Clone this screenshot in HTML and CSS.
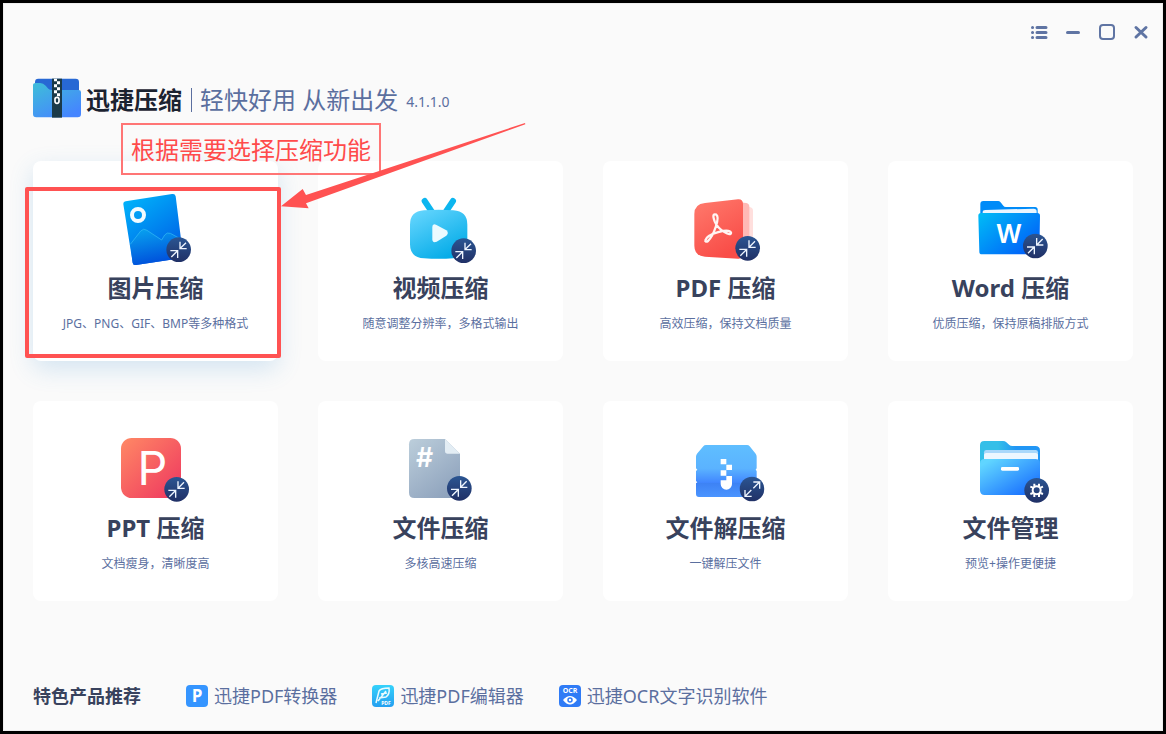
FILE: index.html
```html
<!DOCTYPE html>
<html lang="zh-CN">
<head>
    <meta charset="UTF-8">
    <title>迅捷压缩</title>
    <meta name="viewport" content="width=device-width, initial-scale=1">
    <link rel="stylesheet" href="styles.css">
</head>
<body>
    <!-- shared gradients and badges -->
    <svg class="defs" width="0" height="0" aria-hidden="true">
        <defs>
            <linearGradient id="navy" x1="0" y1="0" x2="0" y2="1"><stop offset="0" stop-color="#2b5592"/><stop offset="1" stop-color="#203066"/></linearGradient>
            <linearGradient id="photo" x1="0.2" y1="0" x2="0.8" y2="1"><stop offset="0" stop-color="#00b2fa"/><stop offset="1" stop-color="#0057e4"/></linearGradient>
            <linearGradient id="hill" x1="0" y1="0" x2="0.3" y2="1"><stop offset="0" stop-color="#08a6f0"/><stop offset="1" stop-color="#0050db"/></linearGradient>
            <linearGradient id="tv" x1="0" y1="0" x2="0.6" y2="1"><stop offset="0" stop-color="#6bd8ff"/><stop offset="1" stop-color="#05ace8"/></linearGradient>
            <linearGradient id="pdf" x1="0" y1="0" x2="0.5" y2="1"><stop offset="0" stop-color="#ff7b6d"/><stop offset="1" stop-color="#f94d48"/></linearGradient>
            <linearGradient id="word" x1="0" y1="0" x2="1" y2="0.8"><stop offset="0" stop-color="#00bdf6"/><stop offset="1" stop-color="#005df9"/></linearGradient>
            <linearGradient id="ppt" x1="0" y1="0" x2="1" y2="1"><stop offset="0" stop-color="#ff8965"/><stop offset="1" stop-color="#ee355f"/></linearGradient>
            <linearGradient id="doc" x1="0" y1="0" x2="0.7" y2="1"><stop offset="0" stop-color="#bccedb"/><stop offset="1" stop-color="#8fa3bd"/></linearGradient>
            <linearGradient id="zip" x1="0" y1="0" x2="0" y2="1"><stop offset="0" stop-color="#5fbeff"/><stop offset="0.45" stop-color="#5bb3ff"/><stop offset="0.72" stop-color="#4187ff"/><stop offset="0.73" stop-color="#3d82f4"/><stop offset="1" stop-color="#4a94ff"/></linearGradient>
            <linearGradient id="folder" x1="0" y1="0" x2="1" y2="1"><stop offset="0.1" stop-color="#60d5ff"/><stop offset="1" stop-color="#0f62ff"/></linearGradient>
            <linearGradient id="folderBack" x1="0" y1="0" x2="1" y2="0"><stop offset="0.3" stop-color="#35bfe8"/><stop offset="0.6" stop-color="#2196f5"/></linearGradient>
            <linearGradient id="logo" x1="0" y1="0" x2="0.7" y2="1"><stop offset="0.1" stop-color="#3fb9dc"/><stop offset="1" stop-color="#4585ff"/></linearGradient>
            <linearGradient id="edit" x1="0" y1="0" x2="0" y2="1"><stop offset="0" stop-color="#35d2fb"/><stop offset="1" stop-color="#249ff0"/></linearGradient>
        </defs>
        <symbol id="shrink" viewBox="-38 -38 76 76">
            <circle r="37" fill="url(#navy)"/>
            <path d="M4-24V-3H24M5-4L22-21M-25 3H-3V25M-4 4L-22 22" fill="none" stroke="#eef5ff" stroke-width="4"/>
        </symbol>
        <symbol id="expand" viewBox="-38 -38 76 76">
            <circle r="37" fill="url(#navy)"/>
            <path d="M4-21H23V-1M22-20L4-2M-21 3V22H-1M-20 21L-2 3" fill="none" stroke="#eef5ff" stroke-width="4"/>
        </symbol>
        <symbol id="gear" viewBox="-38 -38 76 76">
            <circle r="37" fill="url(#navy)"/>
            <circle r="12" fill="none" stroke="#fff" stroke-width="6"/>
            <path d="M-7-11V-20M7-11V-20M-7 11V20M7 11V20M-11-8L-19-11M-11 8L-19 11M11-8L19-11M11 8L19 11" stroke="#fff" stroke-width="6"/>
        </symbol>
    </svg>

    <div class="window">
        <div class="titlebar">
            <button type="button" aria-label="菜单"><svg viewBox="0 0 36 36"><path d="M14 9H32M14 19H32M14 29H32M5 9H5.200M5 19H5.200M5 29H5.200" stroke-width="6"/></svg></button>
            <button type="button" aria-label="最小化"><svg viewBox="0 0 36 36"><path d="M7 19H29" stroke-width="6"/></svg></button>
            <button type="button" aria-label="最大化"><svg viewBox="0 0 36 36"><rect x="4" y="4" width="28" height="28" rx="6" stroke-width="4"/></svg></button>
            <button type="button" aria-label="关闭"><svg viewBox="0 0 36 36"><path d="M8 9L28 28M28 9L8 28" stroke-width="6"/></svg></button>
        </div>

        <header class="brand">
            <svg class="logo" viewBox="99 54 144 120" aria-hidden="true">
                <path d="M105 90V66Q105 56 115 56H227Q237 56 237 66V100H105Z" fill="#2768d4"/>
                <path d="M99 76Q99 69 107 69H120Q130 69 137 77L145 86Q149 90 156 90H236Q243 90 243 97V162Q243 172 233 172H109Q99 172 99 162Z" fill="url(#logo)"/>
                <path d="M156 56H186V173H156Z" fill="#1b3a48"/>
                <path d="M162 56H171V64H162ZM171 64H180V73H171ZM162 73H171V82H162ZM171 82H180V91H171ZM162 91H171V100H162ZM171 100H180V109H171Z" fill="#fff"/>
                <rect x="165" y="112" width="12" height="18" rx="6" fill="none" stroke="#fff" stroke-width="5"/>
            </svg>
            <h1>迅捷压缩</h1>
            <p class="slogan">轻快好用 从新出发</p>
            <span class="version">4.1.1.0</span>
        </header>

        <main class="grid">
            <div class="cell marked">
                <a class="card active" href="#">
                    <svg class="icon" viewBox="285 39 243 228" aria-hidden="true">
                        <path d="M317 64L456 42Q465 40 467 49L489 226Q490 234 482 235L348 255Q339 257 338 248L310 73Q309 65 317 64Z" fill="url(#photo)"/>
                        <path d="M331 193L362 153Q371 143 381 151L425 180L434 165Q441 156 451 160L484 178L490 227Q490 234 482 235L348 255Q339 257 338 248Z" fill="url(#hill)"/>
                        <path d="M331 193L362 153Q371 143 381 151L425 180L434 165Q441 156 451 160L484 178" fill="none" stroke="#35bdf6" stroke-width="2"/>
                        <circle cx="354" cy="105" r="18" fill="none" stroke="#f2fbff" stroke-width="12"/>
                        <use href="#shrink" x="438" y="171" width="76" height="76"/>
                    </svg>
                    <h2>图片压缩</h2>
                    <p>JPG、PNG、GIF、BMP等多种格式</p>
                </a>
                <div class="mark-frame"></div>
                <div class="mark-note">根据需要选择压缩功能</div>
                <svg class="mark-arrow" viewBox="3 189 735 258" aria-hidden="true"><path d="M3 439L68 387L78 405L735 189L736 193L78 430L86 445Z" fill="#ff5252"/></svg>
            </div>
            <div class="cell">
                <a class="card" href="#">
                    <svg class="icon" viewBox="90 39 243 228" aria-hidden="true">
                        <path d="M164 63L186 96M249 63L227 96" stroke="#0db6ef" stroke-width="18" stroke-linecap="round"/>
                        <path d="M162 91Q206 87 250 91Q292 94 292 134V193Q292 233 250 235Q206 238 162 235Q120 233 120 193V134Q120 94 162 91Z" fill="url(#tv)"/>
                        <path d="M187 141Q187 130 198 134L229 151Q238 159 229 167L200 185Q187 190 187 178Z" fill="#ebfaff"/>
                        <use href="#shrink" x="243" y="174" width="76" height="76"/>
                    </svg>
                    <h2>视频压缩</h2>
                    <p>随意调整分辨率，多格式输出</p>
                </a>
            </div>
            <div class="cell">
                <a class="card" href="#">
                    <svg class="icon" viewBox="105 39 243 228" aria-hidden="true">
                        <path d="M270 78L299 81Q309 83 309 92V204H270Z" fill="#ffdfdd"/>
                        <path d="M260 66L289 69Q298 71 298 80V216H260Z" fill="#ffb9b5"/>
                        <path d="M165 69L264 58Q279 57 279 72V223Q279 237 264 236L165 230Q133 228 133 197V102Q133 72 165 69Z" fill="url(#pdf)"/>
                        <path d="M166 181C172 160 237 144 243 158C245 172 205 151 194 124C186 103 192 102 199 104C210 111 193 165 173 184C168 186 165 184 166 181Z" fill="none" stroke="#fff5f3" stroke-width="7"/>
                        <use href="#shrink" x="255" y="167" width="76" height="76"/>
                    </svg>
                    <h2>PDF 压缩</h2>
                    <p>高效压缩，保持文档质量</p>
                </a>
            </div>
            <div class="cell">
                <a class="card" href="#">
                    <svg class="icon" viewBox="120 39 243 228" aria-hidden="true">
                        <path d="M151 72Q151 63 160 63H205Q210 63 213 68L220 77Q222 81 228 81H315Q323 81 323 89V120H151Z" fill="#008bf8"/>
                        <path d="M158 97Q158 90 166 90L311 86Q320 86 320 94V120H158Z" fill="#e9f5ff"/>
                        <path d="M145 107Q145 99 153 99H322Q330 99 330 107L328 215Q328 223 320 223H156Q148 223 148 215Z" fill="url(#word)"/>
                        <text class="glyph glyph-round" x="237" y="189" font-size="76">W</text>
                        <use href="#shrink" x="278" y="160" width="76" height="76"/>
                    </svg>
                    <h2>Word 压缩</h2>
                    <p>优质压缩，保持原稿排版方式</p>
                </a>
            </div>
            <div class="cell">
                <a class="card" href="#">
                    <svg class="icon" viewBox="105 39 243 228" aria-hidden="true">
                        <rect x="123" y="54" width="180" height="180" rx="32" fill="url(#ppt)"/>
                        <text class="glyph glyph-light" x="217" y="194" font-size="140">P</text>
                        <use href="#shrink" x="252" y="170" width="76" height="76"/>
                    </svg>
                    <h2>PPT 压缩</h2>
                    <p>文档瘦身，清晰度高</p>
                </a>
            </div>
            <div class="cell">
                <a class="card" href="#">
                    <svg class="icon" viewBox="90 39 243 228" aria-hidden="true">
                        <path d="M133 57H225L270 101V234H133Q117 234 117 218V73Q117 57 133 57Z" fill="url(#doc)"/>
                        <path d="M225 57L270 101H233Q225 101 225 93Z" fill="#e3edf4"/>
                        <text class="glyph glyph-round" x="164" y="140" font-size="80">#</text>
                        <use href="#shrink" x="230" y="167" width="76" height="76"/>
                    </svg>
                    <h2>文件压缩</h2>
                    <p>多核高速压缩</p>
                </a>
            </div>
            <div class="cell">
                <a class="card" href="#">
                    <svg class="icon" viewBox="105 39 243 228" aria-hidden="true">
                        <path d="M168 75H291Q296 75 299 79L317 101Q320 105 320 110V145L317 149L320 153V183L317 187L320 190V222Q320 231 311 231H147Q138 231 138 222V190L142 187L138 183V153L142 149L138 145V110Q138 105 141 101L160 79Q163 75 168 75Z" fill="url(#zip)"/>
                        <path d="M212 117H229V133H212ZM229 134H246V150H229ZM212 151H229V167H212ZM229 168H246V192A17 17 0 0 1 212 192V181H229Z" fill="#fff"/>
                        <use href="#expand" x="268" y="169" width="76" height="76"/>
                    </svg>
                    <h2>文件解压缩</h2>
                    <p>一键解压文件</p>
                </a>
            </div>
            <div class="cell">
                <a class="card" href="#">
                    <svg class="icon" viewBox="120 39 243 228" aria-hidden="true">
                        <path d="M150 76Q150 63 163 63H219Q225 63 229 67L238 75Q241 78 247 78H316Q330 78 330 92V140H150Z" fill="url(#folderBack)"/>
                        <path d="M162 97Q162 90 169 90H317Q324 90 324 97V130H162Z" fill="#a9d8fb"/>
                        <path d="M162 107Q162 99 169 99H317Q324 99 324 107V130H162Z" fill="#ecf7ff"/>
                        <path d="M150 131Q150 117 164 117H316Q330 117 330 131V211Q330 225 316 225H164Q150 225 150 211Z" fill="url(#folder)"/>
                        <rect x="213" y="141" width="54" height="11" rx="4" fill="#fff"/>
                        <use href="#gear" x="282" y="173" width="76" height="76"/>
                    </svg>
                    <h2>文件管理</h2>
                    <p>预览+操作更便捷</p>
                </a>
            </div>
        </main>

        <footer class="products">
            <strong>特色产品推荐</strong>
            <a href="#">
                <svg viewBox="0 0 22 22" aria-hidden="true"><rect width="22" height="22" rx="4" fill="#3595ff"/><text class="glyph" x="11" y="17" font-size="17">P</text></svg>
                迅捷PDF转换器
            </a>
            <a href="#">
                <svg viewBox="0 0 22 22" aria-hidden="true"><rect width="22" height="22" rx="4" fill="url(#edit)"/><path d="M4 18L7 6Q9 3 17 3Q18 9 14 12L7 13M6 16L14 6M9 9L15 8" fill="none" stroke="#e8fbff" stroke-width="1.5"/><text class="glyph" x="14" y="20" font-size="5">PDF</text></svg>
                迅捷PDF编辑器
            </a>
            <a href="#">
                <svg viewBox="0 0 22 22" aria-hidden="true"><rect width="22" height="22" rx="4" fill="#2f7bf6"/><text class="glyph" x="11" y="8" font-size="7">OCR</text><path d="M4 15Q11 7 18 15Q11 24 4 15Z" fill="#fff"/><circle cx="11" cy="15" r="2" fill="#fff" stroke="#2f7bf6" stroke-width="1.5"/></svg>
                迅捷OCR文字识别软件
            </a>
        </footer>
    </div>
</body>
</html>
```
FILE: styles.css
```css
* {
    box-sizing: border-box;
}
body {
    margin: 0;
    background: #fafafa;
    color: #38425d;
    font-family: "Noto Sans", "Noto Sans CJK SC", sans-serif;
}
h1, h2, p {
    margin: 0;
}
a {
    color: inherit;
    text-decoration: none;
}
.defs {
    position: absolute;
}
.window {
    display: flex;
    flex-direction: column;
    min-height: 100vh;
    padding: 0 30px 21px;
    border: 3px solid #000;
    box-shadow: inset 0 0 0 1px #eee;
}

/* Window buttons */
.titlebar {
    display: flex;
    justify-content: flex-end;
    gap: 16px;
    margin-right: -17px;
    padding-top: 20px;
}
.titlebar button {
    width: 18px;
    height: 18px;
    padding: 0;
    border: none;
    background: none;
    cursor: pointer;
}
.titlebar svg {
    display: block;
    fill: none;
    stroke: #5f74a3;
    stroke-linecap: round;
}

/* Brand */
.brand {
    display: flex;
    align-items: center;
    height: 40px;
    margin-top: 37px;
    color: #5b6f9f;
}
.logo {
    width: 48px;
    height: 40px;
    margin-right: 5px;
}
.brand h1 {
    padding-top: 4px;
    color: #1b2230;
    font-size: 24px;
    line-height: 24px;
}
.slogan {
    margin: 4px 0 0 9px;
    padding-left: 8px;
    border-left: 1px solid #5b6f9f;
    font-size: 24px;
    line-height: 24px;
}
.version {
    margin-left: 8px;
    padding-top: 8px;
    font-size: 14px;
    line-height: 20px;
}

/* Cards */
.grid {
    display: grid;
    grid-template-columns: repeat(4, 1fr);
    gap: 40px;
    margin-top: 43px;
}
.marked {
    position: relative;
    z-index: 1;
}
.card {
    display: flex;
    flex-direction: column;
    align-items: center;
    min-height: 200px;
    padding: 32px 8px 24px;
    border-radius: 8px;
    background: #fff;
    text-align: center;
}
.card.active {
    box-shadow: 0 8px 24px rgba(60, 145, 210, 0.2);
}
.icon {
    width: 81px;
    height: 76px;
}
.card h2 {
    margin-top: 3px;
    font-size: 24px;
    line-height: 32px;
}
.card p {
    margin-top: 10px;
    color: #5b6f9f;
    font-size: 12px;
    line-height: 20px;
}
.glyph {
    fill: #fff;
    font-family: "Open Sans", sans-serif;
    font-weight: bold;
    text-anchor: middle;
}
.glyph-round {
    font-family: Inter, sans-serif;
    font-weight: 600;
}
.glyph-light {
    font-family: Inter, sans-serif;
    font-weight: 400;
}

/* Callout over the first card */
.mark-frame {
    position: absolute;
    top: 26px;
    right: -3px;
    bottom: 3px;
    left: -8px;
    border: 4px solid #ff5252;
    border-radius: 2px;
    pointer-events: none;
}
.mark-note {
    position: absolute;
    top: -38px;
    left: 88px;
    padding: 9px 8px 7px;
    border: 2px solid #ff7575;
    color: #ff4b4b;
    font-size: 24px;
    line-height: 32px;
    white-space: nowrap;
}
.mark-arrow {
    position: absolute;
    top: -38px;
    left: 248px;
    width: 245px;
    height: 86px;
    pointer-events: none;
}

/* Footer */
.products {
    display: flex;
    align-items: center;
    gap: 35px;
    margin-top: auto;
    padding-top: 32px;
    font-size: 18px;
    line-height: 28px;
}
.products strong {
    margin-right: 10px;
}
.products a {
    display: flex;
    align-items: center;
    gap: 6px;
    color: #5b6f9f;
}
.products svg {
    width: 22px;
    height: 22px;
    overflow: visible;
}

@media (max-width: 900px) {
    .grid {
        grid-template-columns: repeat(2, 1fr);
    }
    .products {
        flex-wrap: wrap;
    }
}
```
